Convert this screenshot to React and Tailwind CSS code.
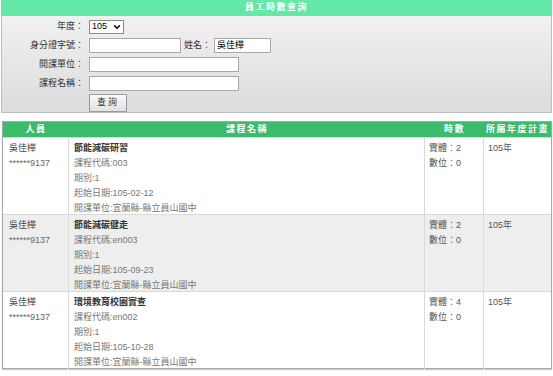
import { ChevronDown } from "lucide-react";

const rows = [
  { name: "吳佳樺", id: "******9137", course: "節能減碳研習", code: "003", start: "105-02-12", real: 2, digital: 0, alt: false },
  { name: "吳佳樺", id: "******9137", course: "節能減碳健走", code: "en003", start: "105-09-23", real: 2, digital: 0, alt: true },
  { name: "吳佳樺", id: "******9137", course: "環境教育校園實查", code: "en002", start: "105-10-28", real: 4, digital: 0, alt: false },
];

const font = { fontFamily: '"Liberation Sans", "Noto Sans CJK TC", sans-serif' };

function Label({ children }) {
  return <div className="w-[87px] pr-[5px] text-right text-[9px] text-[#333]">{children}</div>;
}

function Field({ w }) {
  return <div className={`h-[15px] border border-[#a9a9a9] bg-white ${w}`} />;
}

export default function App() {
  return (
    <div className="w-[553px] h-[376px] bg-white" style={font}>
      <div className="ml-[1px] w-[551px]">
        <div className="h-[16px] bg-[#63e8a7] flex items-center justify-center text-white text-[9px] font-bold tracking-[1.5px]">
          員工時數查詢
        </div>
        <div className="h-[97px] border border-t-0 border-[#bdbdbd] bg-gradient-to-b from-[#f1f1f1] to-[#dcdcdc] pt-[1px]">
          <div className="flex items-center h-[19px]">
            <Label>年度：</Label>
            <div className="h-[14px] w-[35px] border border-[#8a8a8a] bg-white flex items-center justify-between pl-[2px] pr-[1px] text-[9px] text-black">
              105
              <ChevronDown className="w-[10px] h-[10px]" strokeWidth={3.5} />
            </div>
          </div>
          <div className="flex items-center h-[19px]">
            <Label>身分證字號：</Label>
            <Field w="w-[92px]" />
            <div className="w-[33px] pl-[3px] text-[9px] text-[#333]">姓名：</div>
            <div className="h-[15px] w-[57px] border border-[#a9a9a9] bg-white pl-[2px] text-[9px] leading-[13px] text-black">吳佳樺</div>
          </div>
          <div className="flex items-center h-[19px]">
            <Label>開課單位：</Label>
            <Field w="w-[150px]" />
          </div>
          <div className="flex items-center h-[19px]">
            <Label>課程名稱：</Label>
            <Field w="w-[150px]" />
          </div>
          <div className="flex items-center h-[20px]">
            <div className="w-[87px]" />
            <div className="h-[18px] w-[38px] border border-[#9c9c9c] bg-gradient-to-b from-[#fafafa] to-[#e2e2e2] flex items-center justify-center text-[9px] tracking-[2px] text-[#333]">
              查詢
            </div>
          </div>
        </div>
      </div>

      <div className="ml-[2px] mt-[8px] w-[550px] border border-[#a8a8a8] shadow-[0_1px_1px_#c8c8c8]">
        <div className="grid grid-cols-[66px_356px_59px_1fr] h-[15px] bg-[#3dbb6d] text-white text-[9px] font-bold tracking-[1.5px] items-center text-center">
          <div>人員</div>
          <div>課程名稱</div>
          <div>時數</div>
          <div>所屬年度計畫</div>
        </div>
        {rows.map((r, i) => (
          <div
            key={i}
            className={`grid grid-cols-[66px_356px_59px_1fr] h-[77px] border-t border-[#d9d9d9] text-[9px] leading-[15px] ${r.alt ? "bg-[#eeeeee]" : "bg-white"}`}
          >
            <div className="pl-[6px] pt-[3px] border-r border-[#d9d9d9]">
              <div className="text-[#444]">{r.name}</div>
              <div className="text-[#666]">{r.id}</div>
            </div>
            <div className="pl-[5px] pt-[3px] border-r border-[#d9d9d9] text-[#777]">
              <div className="font-bold text-[#333]">{r.course}</div>
              <div>課程代碼:{r.code}</div>
              <div>期別:1</div>
              <div>起始日期:{r.start}</div>
              <div>開課單位:宜蘭縣-縣立員山國中</div>
            </div>
            <div className="pl-[4px] pt-[3px] border-r border-[#d9d9d9] text-[#555]">
              <div>實體：{r.real}</div>
              <div>數位：{r.digital}</div>
            </div>
            <div className="pl-[4px] pt-[3px] text-[#555]">105年</div>
          </div>
        ))}
      </div>
    </div>
  );
}
